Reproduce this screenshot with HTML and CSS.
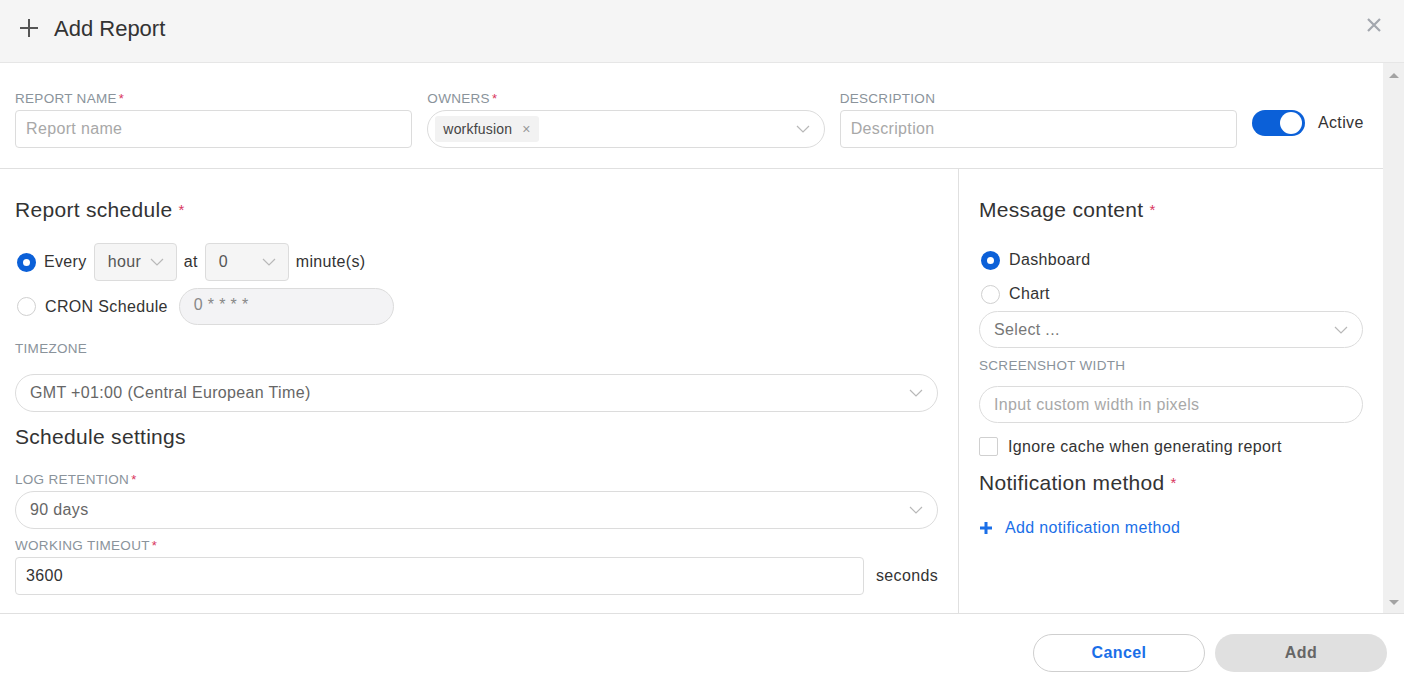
FILE: index.html
```html
<!DOCTYPE html>
<html lang="en">
<head>
  <meta charset="UTF-8" />
  <title>Add Report</title>
  <link rel="stylesheet" href="styles.css">
</head>
<body>
  <div class="modal">
    <!-- Header -->
    <div class="modal-header">
      <svg class="plus-icon" width="20" height="20" viewBox="0 0 20 20"><path d="M10 1v18M1 10h18" stroke="#555" stroke-width="2"/></svg>
      <span class="modal-title">Add Report</span>
      <svg class="close-icon" width="16" height="16" viewBox="0 0 16 16"><path d="M2 2l12 12M14 2L2 14" stroke="#a3a7ae" stroke-width="2.2"/></svg>
    </div>

    <!-- Body -->
    <div class="modal-body">
      <div class="scroll-content">
        <div class="top-row">
          <div class="field">
            <label>Report name<span class="req">*</span></label>
            <div class="input box"><span class="placeholder">Report name</span></div>
          </div>
          <div class="field">
            <label>Owners<span class="req">*</span></label>
            <div class="input pill owners">
              <span class="tag">workfusion <span class="tag-x">×</span></span>
              <svg class="chevron" width="14" height="8" viewBox="0 0 14 8"><path d="M1 1l6 6 6-6" fill="none" stroke="#b8b8b8" stroke-width="1.2"/></svg>
            </div>
          </div>
          <div class="field">
            <label>Description</label>
            <div class="input box"><span class="placeholder">Description</span></div>
          </div>
          <div class="active-toggle">
            <span class="switch"><span class="knob"></span></span>
            <span>Active</span>
          </div>
        </div>

        <div class="columns">
          <div class="col-left">
            <h3>Report schedule <span class="req">*</span></h3>
            <div class="radio-row">
              <span class="radio checked"></span>
              <span>Every</span>
              <div class="mini-select hour">hour
                <svg class="chevron" width="14" height="8" viewBox="0 0 14 8"><path d="M1 1l6 6 6-6" fill="none" stroke="#b8b8b8" stroke-width="1.2"/></svg>
              </div>
              <span>at</span>
              <div class="mini-select minute">0
                <svg class="chevron" width="14" height="8" viewBox="0 0 14 8"><path d="M1 1l6 6 6-6" fill="none" stroke="#b8b8b8" stroke-width="1.2"/></svg>
              </div>
              <span>minute(s)</span>
            </div>
            <div class="radio-row cron">
              <span class="radio"></span>
              <span>CRON Schedule</span>
              <div class="cron-input">0 * * * *</div>
            </div>

            <label class="tz-label">Timezone</label>
            <div class="input pill select">
              <span class="value">GMT +01:00 (Central European Time)</span>
              <svg class="chevron" width="14" height="8" viewBox="0 0 14 8"><path d="M1 1l6 6 6-6" fill="none" stroke="#b8b8b8" stroke-width="1.2"/></svg>
            </div>

            <h3 class="settings-title">Schedule settings</h3>
            <label>Log retention<span class="req">*</span></label>
            <div class="input pill select">
              <span class="value">90 days</span>
              <svg class="chevron" width="14" height="8" viewBox="0 0 14 8"><path d="M1 1l6 6 6-6" fill="none" stroke="#b8b8b8" stroke-width="1.2"/></svg>
            </div>
            <label class="timeout-label">Working timeout<span class="req">*</span></label>
            <div class="timeout-row">
              <div class="input box"><span class="text">3600</span></div>
              <span>seconds</span>
            </div>
          </div>

          <div class="col-right">
            <h3>Message content <span class="req">*</span></h3>
            <div class="radio-line first">
              <span class="radio checked"></span>
              <span>Dashboard</span>
            </div>
            <div class="radio-line">
              <span class="radio"></span>
              <span>Chart</span>
            </div>
            <div class="input pill select">
              <span class="placeholder dark">Select ...</span>
              <svg class="chevron" width="14" height="8" viewBox="0 0 14 8"><path d="M1 1l6 6 6-6" fill="none" stroke="#b8b8b8" stroke-width="1.2"/></svg>
            </div>
            <label class="shot-label">Screenshot width</label>
            <div class="input pill"><span class="placeholder">Input custom width in pixels</span></div>
            <div class="check-line">
              <span class="checkbox"></span>
              <span>Ignore cache when generating report</span>
            </div>
            <h3 class="notif-title">Notification method <span class="req">*</span></h3>
            <div class="add-link">
              <svg width="14" height="14" viewBox="0 0 14 14"><path d="M7 1v12M1 7h12" stroke="#1a6fe8" stroke-width="3"/></svg>
              <span>Add notification method</span>
            </div>
          </div>
        </div>
      </div>

      <div class="scrollbar">
        <span class="arrow up"></span>
        <span class="arrow down"></span>
      </div>
    </div>

    <!-- Footer -->
    <div class="modal-footer">
      <button class="btn cancel">Cancel</button>
      <button class="btn add">Add</button>
    </div>
  </div>
</body>
</html>
```

FILE: styles.css
```css
* {
  box-sizing: border-box;
}
body {
  margin: 0;
  background: #fff;
  color: #333;
  font-family: 'Liberation Sans', Arial, sans-serif;
  font-size: 16px;
  letter-spacing: 0.35px;
}
.modal {
  width: 1404px;
  height: 684px;
  display: flex;
  flex-direction: column;
}

/* header */
.modal-header {
  height: 63px;
  flex: none;
  background: #f5f5f5;
  border-bottom: 1px solid #e6e6e6;
  display: flex;
  align-items: center;
  padding: 0 22px 6px 19px;
}
.plus-icon {
  margin-right: 15px;
}
.modal-title {
  font-size: 22px;
  letter-spacing: 0;
  color: #333;
  flex: 1;
  padding-top: 2px;
}
.close-icon {
  margin-top: -6px;
}

/* body */
.modal-body {
  height: 551px;
  flex: none;
  display: flex;
  border-bottom: 1px solid #e0e0e0;
}
.scroll-content {
  flex: 1;
  display: flex;
  flex-direction: column;
}
.scrollbar {
  width: 21px;
  background: #f0f0f0;
  display: flex;
  flex-direction: column;
  justify-content: space-between;
  align-items: center;
  padding: 10px 0 8px;
}
.arrow {
  width: 0;
  height: 0;
  border-left: 5px solid transparent;
  border-right: 5px solid transparent;
}
.arrow.up {
  border-bottom: 5px solid #a3a3a3;
}
.arrow.down {
  border-top: 5px solid #a3a3a3;
}

label {
  display: block;
  font-size: 13.5px;
  letter-spacing: 0.3px;
  line-height: 16px;
  color: #8a939b;
  text-transform: uppercase;
  margin-bottom: 3px;
}
.req {
  color: #d9365e;
  font-size: 13px;
  vertical-align: top;
  margin-left: 2px;
}
h3 .req {
  font-size: 15px;
  margin-left: 0;
}

.top-row {
  display: flex;
  gap: 15px;
  padding: 28px 20px 20px 15px;
  border-bottom: 1px solid #e0e0e0;
}
.field {
  flex: 1;
}
.input {
  height: 38px;
  border: 1px solid #dcdcdc;
  background: #fff;
  display: flex;
  align-items: center;
  padding: 0 10px;
  font-size: 16px;
}
.input.box {
  border-radius: 4px;
}
.input.pill {
  border-radius: 19px;
  padding: 0 14px;
}
.placeholder {
  color: #a8a8a8;
}
.placeholder.dark {
  color: #777;
}
.value {
  color: #666;
  flex: 1;
}
.text {
  color: #333;
}
.chevron {
  margin-left: auto;
}
.input.owners {
  padding-left: 7px;
}
.tag {
  background: #f2f2f2;
  border-radius: 3px;
  font-size: 14px;
  letter-spacing: 0.2px;
  color: #444;
  padding: 5px 8px;
}
.tag-x {
  color: #999;
  margin-left: 6px;
}
.active-toggle {
  width: 111px;
  flex: none;
  display: flex;
  align-items: center;
  gap: 13px;
  padding-top: 19px;
  align-self: flex-start;
}
.switch {
  width: 53px;
  height: 26px;
  flex: none;
  background: #0b60d8;
  border-radius: 13px;
  display: flex;
  align-items: center;
  justify-content: flex-end;
  padding-right: 3px;
}
.knob {
  width: 22px;
  height: 22px;
  border-radius: 50%;
  background: #fff;
}

.columns {
  flex: 1;
  display: flex;
}
.col-left {
  width: 959px;
  border-right: 1px solid #e0e0e0;
  padding: 29px 20px 0 15px;
}
.col-right {
  flex: 1;
  padding: 29px 20px 0 20px;
}
h3 {
  font-size: 21px;
  letter-spacing: 0.3px;
  font-weight: normal;
  color: #333;
  margin: 0;
  line-height: 24px;
}

.radio-row {
  display: flex;
  align-items: center;
  gap: 7px;
  margin-top: 21px;
  height: 38px;
}
.radio-row.cron {
  margin-top: 7px;
  height: 37px;
  gap: 8px;
}
.radio {
  width: 19px;
  height: 19px;
  border-radius: 50%;
  border: 1px solid #d0d0d0;
  background: #fff;
  margin-left: 2px;
  margin-right: 1px;
  flex: none;
}
.radio.checked {
  border: 6px solid #0b60d8;
}
.mini-select {
  height: 38px;
  background: #f5f5f5;
  border: 1px solid #dcdcdc;
  border-radius: 4px;
  display: flex;
  align-items: center;
  gap: 6px;
  padding: 0 12px 0 13px;
  color: #555;
}
.mini-select.hour {
  width: 83px;
}
.mini-select.minute {
  width: 84px;
}
.cron-input {
  width: 215px;
  height: 37px;
  margin-left: 3px;
  border-radius: 19px;
  border: 1px solid #dcdcdc;
  background: #f3f3f5;
  color: #888;
  padding: 0 14px 3px;
  display: flex;
  align-items: center;
}
.tz-label {
  margin-top: 16px;
  margin-bottom: 17px;
}
.settings-title {
  margin-top: 13px;
  margin-bottom: 23px;
}
.timeout-label {
  margin-top: 9px;
}
.timeout-row {
  display: flex;
  align-items: center;
  gap: 12px;
}
.timeout-row .input {
  flex: 1;
}

.radio-line {
  display: flex;
  align-items: center;
  gap: 8px;
  height: 24px;
  margin-top: 10px;
}
.radio-line.first {
  margin-top: 26px;
}
.col-right .select {
  margin-top: 5px;
  height: 37px;
}
.shot-label {
  margin-top: 10px;
  margin-bottom: 12px;
}
.col-right .input.pill {
  height: 37px;
}
.check-line {
  display: flex;
  align-items: center;
  gap: 10px;
  margin-top: 14px;
}
.checkbox {
  width: 19px;
  height: 19px;
  border: 1px solid #d0d0d0;
  border-radius: 2px;
}
.notif-title {
  margin-top: 15px;
}
.add-link {
  display: flex;
  align-items: center;
  gap: 12px;
  color: #1a6fe8;
  margin-top: 24px;
}

/* footer */
.modal-footer {
  flex: 1;
  display: flex;
  justify-content: flex-end;
  gap: 10px;
  padding: 20px 17px 0 0;
}
.btn {
  width: 172px;
  height: 38px;
  border-radius: 19px;
  font-family: 'Liberation Sans', Arial, sans-serif;
  font-size: 16px;
  letter-spacing: 0.4px;
  font-weight: bold;
  cursor: pointer;
}
.btn.cancel {
  background: #fff;
  border: 1px solid #cfcfcf;
  color: #1a6fe8;
}
.btn.add {
  background: #e0e0e0;
  border: none;
  color: #666;
}
```
